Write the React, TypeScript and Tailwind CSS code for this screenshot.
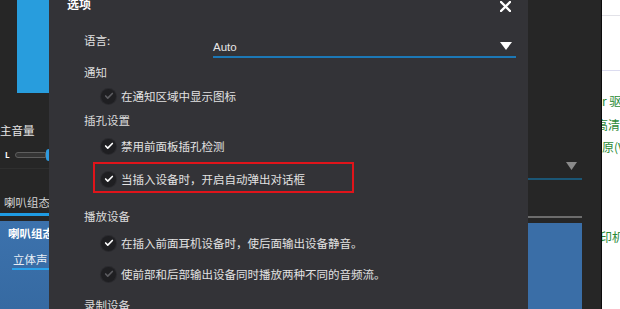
import { Check } from 'lucide-react';

const font = { fontFamily: '"Noto Sans CJK SC", "Noto Sans", sans-serif' };

type OptionProps = {
  label: string;
  active?: boolean;
};

const Option = ({ label, active = true }: OptionProps) => (
  <div className="flex h-[14px] items-center gap-[5px] whitespace-nowrap">
    <span className="flex h-[15px] w-[15px] flex-shrink-0 items-center justify-center rounded-full bg-[#1f1f22] shadow-[0_0_0_1px_#2a2a2e]">
      <Check
        className={`h-[10px] w-[10px] ${active ? 'text-white' : 'text-[#5c5c60]'}`}
        strokeWidth={4}
      />
    </span>
    <span className="text-[11.5px] leading-[14px] text-[#e2e2e2]">{label}</span>
  </div>
);

const SectionTitle = ({ label, className }: { label: string; className: string }) => (
  <div className={`text-[11.5px] leading-[14px] text-[#dcdcdc] ${className}`}>{label}</div>
);

const LeftPane = () => (
  <div className="flex w-[49px] flex-shrink-0 flex-col overflow-hidden whitespace-nowrap bg-[#262626]">
    <div className="ml-[17px] h-[93px] w-[32px] bg-[#289ddd]" />
    <div className="mt-[30px] text-[11.5px] leading-[14px] text-[#e6e6e6]">主音量</div>
    <div className="mt-[12px] flex h-[12px] items-center">
      <span className="w-[15px] pl-[5px] text-[8px] font-bold leading-none text-white">L</span>
      <span className="h-[6px] w-[32px] rounded-l-full border border-[#5e5e5e] bg-[#353535]" />
      <span className="h-[12px] w-[3px] rounded-l-sm bg-[#2e9ae0]" />
    </div>
    <div className="mt-[7px] h-px bg-[#2f2f2f]" />
    <div className="mt-[26px] pl-[4px] text-[11.5px] leading-[14px] text-[#d2d2d2]">喇叭组态</div>
    <div className="mt-[4px] h-[3px] bg-[#1f9be2]" />
    <div className="mt-[5px] flex flex-1 flex-col bg-gradient-to-b from-[#3c72ad] to-[#366aa2]">
      <div className="mt-[5px] pl-[8px] text-[11.5px] font-bold leading-[14px] text-white">喇叭组态</div>
      <div className="mt-[12px] ml-[12px] border-b-2 border-[#2aa2ea] pb-[2px] pl-[1px] text-[11.5px] leading-[14px] text-[#e8eef6]">
        立体声
      </div>
    </div>
  </div>
);

const Dialog = () => (
  <div className="flex w-[479px] flex-shrink-0 flex-col bg-[#333337]">
    <div className="flex h-[13px] items-start justify-between pl-[18px] pr-[17px]">
      <span className="-mt-[3px] text-[12px] font-bold leading-[14px] text-white">选项</span>
      <svg width="11" height="11" viewBox="0 0 11 11" className="mt-[1px]">
        <path d="M1 1 L10 10 M10 1 L1 10" stroke="white" strokeWidth="2.4" strokeLinecap="round" />
      </svg>
    </div>
    <div className="mx-[4px] h-[2px] bg-[#58585c]" />

    <div className="flex flex-col pl-[35px]">
      <div className="mt-[21px] flex">
        <span className="w-[129px] text-[11.5px] leading-[14px] text-[#e2e2e2]">语言:</span>
        <div className="mt-[7px] flex w-[303px] items-center justify-between border-b-2 border-[#1c78b6] pb-[2px] pr-[4px]">
          <span className="text-[11.5px] leading-[14px] text-[#e6e6e6]" style={{ fontFamily: '"Liberation Sans", sans-serif' }}>
            Auto
          </span>
          <svg width="12" height="8" viewBox="0 0 12 8" className="-mt-[3px]">
            <path d="M0 0 H12 L6 8 Z" fill="white" />
          </svg>
        </div>
      </div>

      <SectionTitle label="通知" className="mt-[7px]" />
      <div className="mt-[10px] ml-[17px]">
        <Option label="在通知区域中显示图标" active={false} />
      </div>

      <SectionTitle label="插孔设置" className="mt-[10px]" />
      <div className="mt-[12px] ml-[17px]">
        <Option label="禁用前面板插孔检测" />
      </div>
      <div className="mt-[9px] ml-[9px] w-[261px] border-2 border-[#e0141a] pl-[6px] pt-[8px] pb-[5px]">
        <Option label="当插入设备时，开启自动弹出对话框" />
      </div>

      <SectionTitle label="播放设备" className="mt-[16px]" />
      <div className="mt-[13px] ml-[17px]">
        <Option label="在插入前面耳机设备时，使后面输出设备静音。" />
      </div>
      <div className="mt-[17px] ml-[17px]">
        <Option label="使前部和后部输出设备同时播放两种不同的音频流。" active={false} />
      </div>

      <SectionTitle label="录制设备" className="mt-[17px]" />
    </div>
  </div>
);

const RightPane = () => (
  <div className="flex w-[73px] flex-shrink-0 bg-[#262626]">
    <div className="flex w-[54px] flex-col">
      <div className="mt-[162px] flex justify-end pr-[5px]">
        <svg width="11" height="8" viewBox="0 0 11 8">
          <path d="M0 0 H11 L5.5 8 Z" fill="#8a8a8a" />
        </svg>
      </div>
      <div className="mt-[8px] h-[2px] bg-[#1b5675]" />
      <div className="mt-[36px] h-[2px] bg-[#6c6c6c]" />
      <div className="mt-[5px] flex-1 bg-[#3a6ea7]" />
    </div>
  </div>
);

const WebPage = () => (
  <div className="flex flex-1 flex-col overflow-hidden whitespace-nowrap bg-white text-[12px] leading-[14px] text-[#2b8a37]">
    <div className="mt-[15px] h-px bg-[#e2e2e8]" />
    <div className="mt-[54px] h-px bg-[#dcdcf0]" />
    <div className="mt-[23px]">r 驱动</div>
    <div className="mt-[10px] -ml-[6px]">高清晰</div>
    <div className="mt-[8px]">原(VIA)</div>
    <div className="mt-[76px] -ml-[2px]">印机</div>
  </div>
);

export default function App() {
  return (
    <div className="flex h-[309px] w-[620px] overflow-hidden bg-[#262626]" style={font}>
      <LeftPane />
      <Dialog />
      <RightPane />
      <div className="w-px flex-shrink-0 bg-[#0c0c0c]" />
      <WebPage />
    </div>
  );
}
